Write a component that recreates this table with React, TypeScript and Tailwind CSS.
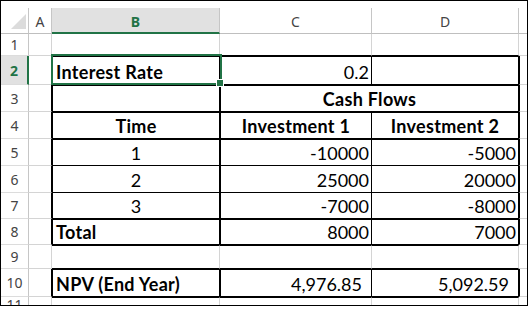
import React from "react";

type L = "g" | "k" | "K" | "n";

const hLines: L[][] = [
  ["g", "K", "K", "K", "g"], // 1
  ["g", "K", "K", "K", "g"], // 2
  ["g", "K", "K", "K", "g"], // 3
  ["g", "K", "K", "K", "g"], // 4
  ["g", "k", "k", "k", "g"], // 5
  ["g", "k", "k", "k", "g"], // 6
  ["g", "K", "K", "K", "g"], // 7
  ["g", "K", "K", "K", "g"], // 8
  ["g", "K", "K", "K", "g"], // 9
  ["g", "K", "K", "K", "g"], // 10
  ["g", "g", "g", "g", "g"], // 11
];

const vLines: L[][] = [
  ["g", "g", "g", "g", "n"],
  ["K", "K", "k", "K", "n"],
  ["K", "K", "n", "K", "n"],
  ["K", "K", "k", "K", "n"],
  ["K", "K", "k", "K", "n"],
  ["K", "K", "k", "K", "n"],
  ["K", "K", "k", "K", "n"],
  ["K", "K", "k", "K", "n"],
  ["g", "g", "g", "g", "n"],
  ["K", "K", "k", "K", "n"],
  ["g", "g", "g", "g", "n"],
];

const rowHeights = [
  "h-[22px]",
  "h-[29px]",
  "h-[27px]",
  "h-[27px]",
  "h-[27px]",
  "h-[27px]",
  "h-[26px]",
  "h-[26px]",
  "h-[24px]",
  "h-[28px]",
  "h-[8px]",
];

type Cell = {
  text?: string;
  align?: "l" | "c" | "r";
  bold?: boolean;
  pr?: boolean;
};

const content: Record<string, Cell> = {
  "2-1": { text: "Interest Rate", align: "l", bold: true },
  "2-2": { text: "0.2", align: "r" },
  "3-2": { text: "Cash Flows", align: "c", bold: true },
  "4-1": { text: "Time", align: "c", bold: true },
  "4-2": { text: "Investment 1", align: "c", bold: true },
  "4-3": { text: "Investment 2", align: "c", bold: true },
  "5-1": { text: "1", align: "c" },
  "5-2": { text: "-10000", align: "r" },
  "5-3": { text: "-5000", align: "r" },
  "6-1": { text: "2", align: "c" },
  "6-2": { text: "25000", align: "r" },
  "6-3": { text: "20000", align: "r" },
  "7-1": { text: "3", align: "c" },
  "7-2": { text: "-7000", align: "r" },
  "7-3": { text: "-8000", align: "r" },
  "8-1": { text: "Total", align: "l", bold: true },
  "8-2": { text: "8000", align: "r" },
  "8-3": { text: "7000", align: "r" },
  "10-1": { text: "NPV (End Year)", align: "l", bold: true },
  "10-2": { text: "4,976.85", align: "r", pr: true },
  "10-3": { text: "5,092.59", align: "r", pr: true },
};

function bottomCls(l: L) {
  if (l === "g") return "border-b border-b-[#d4d4d4]";
  if (l === "k" || l === "K") return "border-b border-b-black";
  return "";
}
function rightCls(l: L) {
  if (l === "g") return "border-r border-r-[#d4d4d4]";
  if (l === "k" || l === "K") return "border-r border-r-black";
  return "";
}

const COLS = "grid grid-cols-[28px_23px_168px_152px_147px_8px]";

function Row({ r }: { r: number }) {
  const idx = r - 1;
  const cells: React.ReactNode[] = [];
  const selected = r === 2;
  cells.push(
    <div
      key="h"
      className={
        "flex items-center justify-center border-b border-b-[#dcdcdc] font-['Noto_Sans'] text-[14px] leading-none " +
        (selected
          ? "bg-[#e1e1e1] border-r-2 border-r-[#217346] font-bold text-[#217346]"
          : "border-r border-r-[#c6c6c6] text-[#444444]")
      }
    >
      <span className="mt-[1px]">{r}</span>
    </div>
  );
  for (let c = 0; c < 5; c++) {
    const merged = r === 3 && c === 2;
    if (r === 3 && c === 3) continue;
    const cc = merged ? 3 : c;
    const cls: string[] = [];
    cls.push(bottomCls(hLines[idx][c]));
    cls.push(rightCls(vLines[idx][cc]));
    if (idx > 0 && hLines[idx - 1][c] === "K") cls.push("border-t border-t-black");
    if (c > 0 && vLines[idx][c - 1] === "K") cls.push("border-l border-l-black");
    const info = content[`${r}-${c}`];
    let just = "justify-start pl-[3px]";
    if (info?.align === "c") just = "justify-center";
    if (info?.align === "r") just = info.pr ? "justify-end pr-[9px]" : "justify-end pr-[2px]";
    cells.push(
      <div
        key={c}
        className={
          "flex items-end overflow-hidden whitespace-nowrap pb-[2px] font-['Lato'] text-[18px] leading-[20px] text-black " +
          just +
          " " +
          (merged ? "col-span-2 " : "") +
          (info?.bold ? "font-bold tracking-[0.3px] " : "") +
          cls.join(" ")
        }
      >
        {info?.text ?? ""}
      </div>
    );
  }
  return <div className={COLS + " " + rowHeights[idx]}>{cells}</div>;
}

export default function App() {
  const rows = [1, 2, 3, 4, 5, 6, 7, 8, 9, 10, 11];
  return (
    <div className="relative h-[306px] w-[528px] overflow-hidden border border-black bg-white">
      <div className="h-[7px]" />
      <div className={COLS + " h-[26px] font-['Noto_Sans'] text-[14px] leading-none text-[#444444]"}>
        <div className="flex items-end justify-end border-b border-r border-b-[#bfbfbf] border-r-[#c6c6c6] pb-[4px] pr-[2px]">
          <svg width="15" height="15" viewBox="0 0 15 15">
            <polygon points="15,0 15,15 0,15" fill="#dcdcdc" />
          </svg>
        </div>
        <div className="flex items-center justify-center border-b border-r border-b-[#bfbfbf] border-r-[#c6c6c6] pt-[2px]">
          A
        </div>
        <div className="flex items-center justify-center border-b-2 border-r border-b-[#217346] border-r-[#c6c6c6] bg-[#e1e1e1] pt-[3px] font-bold text-[#217346]">
          B
        </div>
        <div className="flex items-center justify-center border-b border-r border-b-[#bfbfbf] border-r-[#c6c6c6] pt-[2px]">
          C
        </div>
        <div className="flex items-center justify-center border-b border-r border-b-[#bfbfbf] border-r-[#c6c6c6] pt-[2px]">
          D
        </div>
        <div className="border-b border-b-[#bfbfbf]" />
      </div>
      {rows.map((r) => (
        <Row key={r} r={r} />
      ))}
      <div className="pointer-events-none absolute left-[50px] top-[53px] h-[31px] w-[171px] border-2 border-[#217346]" />
      <div className="pointer-events-none absolute left-[215px] top-[78px] h-[8px] w-[8px] border border-white bg-[#217346]" />
    </div>
  );
}
